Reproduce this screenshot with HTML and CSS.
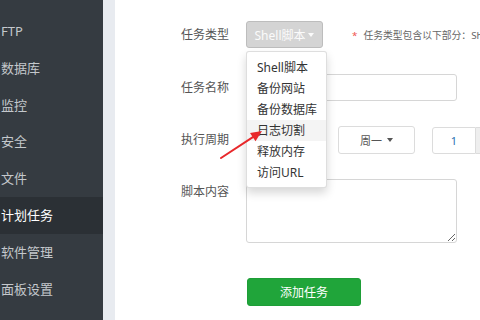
FILE: index.html
```html
<!DOCTYPE html>
<html lang="zh">
<head>
<meta charset="utf-8">
<link rel="stylesheet" href="styles.css">
</head>
<body>
<nav class="side">
  <div class="item">FTP</div>
  <div class="item">数据库</div>
  <div class="item">监控</div>
  <div class="item">安全</div>
  <div class="item">文件</div>
  <div class="item active">计划任务</div>
  <div class="item">软件管理</div>
  <div class="item">面板设置</div>
</nav>
<div class="strip"></div>
<main class="main">
  <div class="row r1">
    <span class="lbl">任务类型</span>
    <div class="dd">
      <button class="btn-type">Shell脚本 <span class="caret"></span></button>
      <ul class="menu">
        <li>Shell脚本</li>
        <li>备份网站</li>
        <li>备份数据库</li>
        <li class="hover">日志切割</li>
        <li>释放内存</li>
        <li>访问URL</li>
      </ul>
    </div>
    <span class="hint"><i>*</i>任务类型包含以下部分：Shell脚本、备份网站、备份数据库</span>
  </div>
  <div class="row r2">
    <span class="lbl">任务名称</span>
    <input class="inp" type="text">
  </div>
  <div class="row r3">
    <span class="lbl">执行周期</span>
    <button class="sel sel-cycle" aria-label="每星期"></button>
    <button class="sel sel-week">周一 <span class="caret dark"></span></button>
    <div class="grp"><input class="num" type="text" value="1"><span class="addon">小时</span></div>
  </div>
  <div class="row r4">
    <span class="lbl">脚本内容</span>
    <textarea class="ta"></textarea>
  </div>
  <div class="row r5">
    <span class="lbl"></span>
    <button class="btn-add">添加任务</button>
  </div>
</main>
<svg class="arrow" width="480" height="320" viewBox="0 0 480 320">
  <line x1="221" y1="158" x2="254" y2="136.3" stroke="#e8282b" stroke-width="2" stroke-linecap="round"/>
  <polygon points="262,131 255.5,141.2 250,132.9" fill="#e8282b"/>
</svg>
</body>
</html>
```

FILE: styles.css
```css
* { box-sizing: border-box; }
html, body { margin: 0; padding: 0; }
body {
  width: 480px;
  height: 320px;
  overflow: hidden;
  display: flex;
  position: relative;
  font-family: "Noto Sans", "Noto Sans CJK SC", sans-serif;
  background: #fff;
}
.side {
  width: 103px;
  flex: none;
  background: #353b41;
  padding-top: 13px;
}
.item {
  height: 36.8px;
  line-height: 36.8px;
  padding-left: 1px;
  font-size: 13px;
  color: #c4c8cc;
  white-space: nowrap;
}
.item.active {
  background: #2b3035;
  color: #fff;
}
.strip {
  width: 12px;
  flex: none;
  background: #e8ebf0;
}
.main {
  flex: 1;
  min-width: 0;
  overflow: hidden;
  padding-top: 21px;
}
.row {
  display: flex;
  align-items: center;
  white-space: nowrap;
}
.lbl {
  width: 114px;
  flex: none;
  margin-right: 17px;
  text-align: right;
  font-size: 12px;
  color: #555;
  line-height: 16px;
}
.dd { position: relative; flex: none; }
.btn-type {
  width: 77px;
  height: 27px;
  padding: 0;
  background: #d4d4d4;
  border: 1px solid #bdbdbd;
  border-radius: 3px;
  color: #fbfbfb;
  font-family: inherit;
  font-size: 12px;
  display: flex;
  align-items: center;
  justify-content: center;
  gap: 3px;
}
.caret {
  display: inline-block;
  width: 0;
  height: 0;
  border-top: 4px solid #fbfbfb;
  border-left: 3.5px solid transparent;
  border-right: 3.5px solid transparent;
}
.caret.dark { border-top-color: #555; }
.menu {
  position: absolute;
  top: 30px;
  left: 0;
  width: 81px;
  margin: 0;
  padding: 4.5px 0;
  list-style: none;
  background: #fff;
  border: 1px solid rgba(0,0,0,.13);
  border-radius: 3px;
  box-shadow: 0 5px 10px rgba(0,0,0,.16);
  z-index: 5;
}
.menu li {
  height: 21px;
  line-height: 21px;
  padding-left: 10px;
  font-size: 12px;
  color: #333;
}
.menu li.hover { background: #f4f4f4; }
.hint {
  margin-left: 29px;
  font-size: 9.8px;
  color: #666;
}
.hint i {
  font-style: normal;
  color: #ef5350;
  margin-right: 6px;
}
.r2 { margin-top: 26px; }
.inp {
  width: 211px;
  height: 27px;
  border: 1px solid #d6d6d6;
  border-radius: 3px;
  flex: none;
}
.r3 { margin-top: 25px; }
.sel {
  height: 28px;
  background: #fff;
  border: 1px solid #dcdcdc;
  border-radius: 3px;
  font-family: inherit;
  font-size: 11px;
  color: #555;
  padding: 0;
  flex: none;
  display: flex;
  align-items: center;
  justify-content: center;
  gap: 5px;
}
.sel-cycle { width: 80px; }
.sel-week { width: 77px; margin-left: 12px; }
.grp {
  display: flex;
  margin-left: 17px;
  flex: none;
}
.num {
  width: 44px;
  height: 27px;
  border: 1px solid #dcdcdc;
  border-radius: 3px 0 0 3px;
  text-align: center;
  font-family: inherit;
  font-size: 11px;
  color: #2a6fb0;
  padding: 0;
}
.addon {
  height: 27px;
  line-height: 25px;
  padding: 0 8px;
  background: #eee;
  border: 1px solid #dcdcdc;
  border-left: 0;
  font-size: 11px;
  color: #555;
}
.r4 { margin-top: 25px; align-items: flex-start; }
.r4 .lbl { padding-top: 5px; }
.ta {
  width: 211px;
  height: 64px;
  border: 1px solid #d6d6d6;
  border-radius: 3px;
  flex: none;
  margin: 0;
}
.r5 { margin-top: 35px; }
.r5 .lbl { margin-right: 18px; }
.btn-add {
  width: 114px;
  height: 28px;
  background: #20a53a;
  border: 1px solid #1e9e37;
  border-radius: 3px;
  color: #fff;
  font-family: inherit;
  font-size: 12px;
  padding: 0;
}
.arrow {
  position: absolute;
  left: 0;
  top: 0;
  pointer-events: none;
  z-index: 10;
}
```
